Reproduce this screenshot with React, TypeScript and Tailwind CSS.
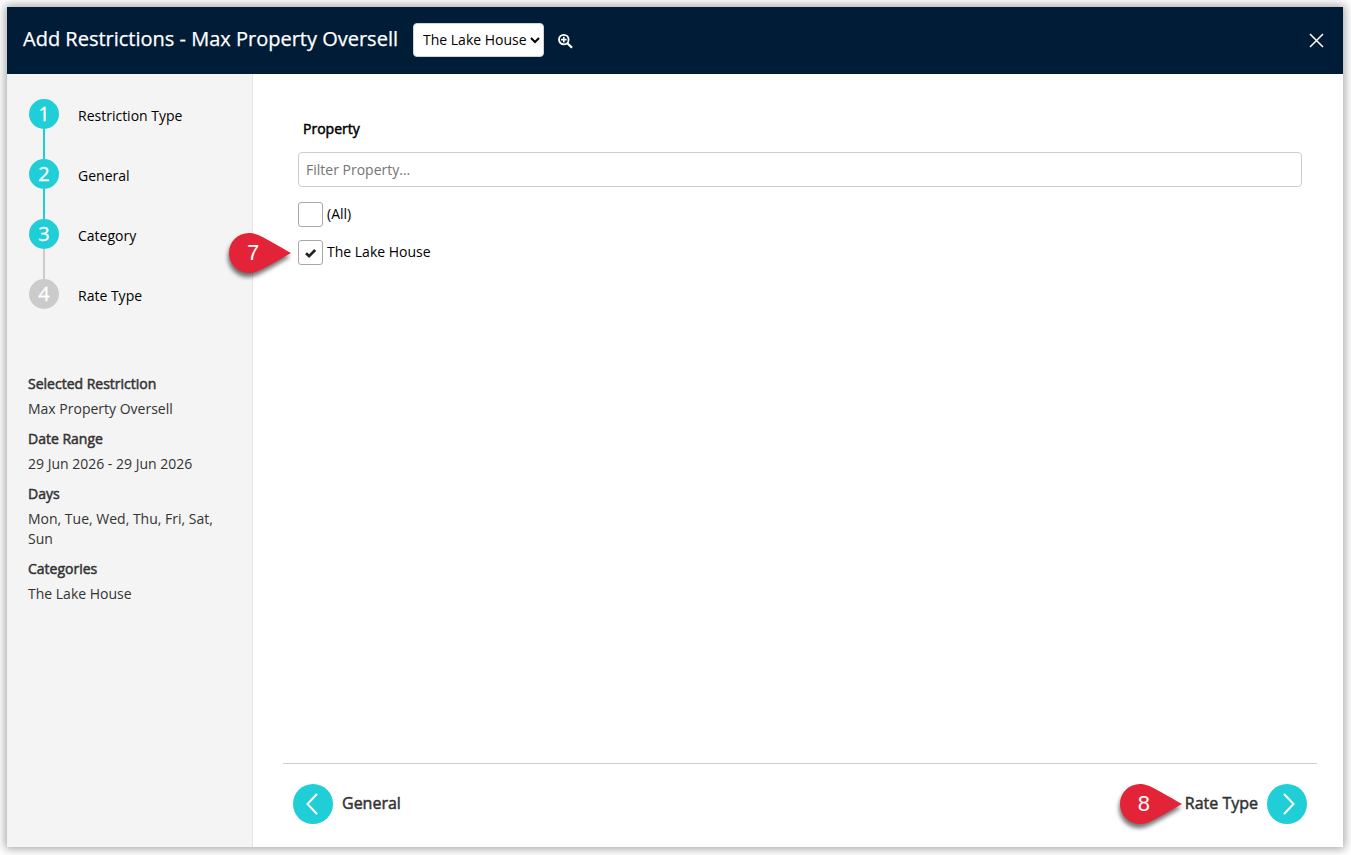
import { useState } from "react";

const steps = [
  { label: "Restriction Type", done: true },
  { label: "General", done: true },
  { label: "Category", done: true },
  { label: "Rate Type", done: false },
];

const summary = [
  { title: "Selected Restriction", value: "Max Property Oversell" },
  { title: "Date Range", value: "29 Jun 2026 - 29 Jun 2026" },
  { title: "Days", value: "Mon, Tue, Wed, Thu, Fri, Sat, Sun" },
  { title: "Categories", value: "The Lake House" },
];

function Callout({ number, className }: { number: string; className: string }) {
  return <div className={`absolute w-[62px] h-10 ${className}`}>
    <svg viewBox="0 0 62 40" className="absolute inset-0 w-[62px] h-10 overflow-visible drop-shadow-[-1px_4px_2px_rgba(0,0,0,0.55)]">
      <path d="M20 0C28 0 34 4 62 20C34 36 28 40 20 40A20 20 0 0 1 20 0Z" fill="#e32338" />
    </svg>
    <span className="absolute left-[18px] top-2 font-['Liberation_Sans',sans-serif] text-[22px] leading-6 text-white">{number}</span>
  </div>
}

function Checkbox({ label, checked, onClick }: { label: string; checked: boolean; onClick: () => void }) {
  return <div onClick={onClick} className="flex h-[25px] cursor-pointer gap-1">
    <div className="flex size-[25px] items-center justify-center rounded-[3px] border border-[#a9a9a9] bg-white">
      {checked && <svg viewBox="0 0 11 9" className="mt-0.5 h-[9px] w-[11px] overflow-visible" fill="none" stroke="#212529" strokeWidth="2.7">
        <path d="M1 4.2L4.1 7.1L10.2 1" />
      </svg>}
    </div>
    <span className="leading-[23px]">{label}</span>
  </div>
}

export default function App() {
  const [all, setAll] = useState(false);
  const [lake, setLake] = useState(true);

  return <div className="h-[855px] w-[1351px] bg-white p-[7px] pb-2 font-['Open_Sans',sans-serif] text-sm text-black">
    <div className="flex h-[840px] w-[1336px] flex-col bg-white shadow-[0_0_9px_2px_rgba(0,0,0,0.35)]">
      {/* header */}
      <div className="flex h-[67px] items-center bg-[#001c36] pl-4 pr-5 text-white">
        <h1 className="-mt-1 w-[390px] whitespace-nowrap text-xl [-webkit-text-stroke:0.25px]">Add Restrictions - Max Property Oversell</h1>
        <select className="mb-0.5 h-[34px] w-[131px] rounded border border-[#ced4da] bg-white pl-[5px] text-sm text-black">
          <option>The Lake House</option>
        </select>
        <svg viewBox="0 0 15 15" className="ml-3.5 mt-px size-[15px] overflow-visible" fill="none" stroke="currentColor" strokeWidth="2">
          <circle cx="5.8" cy="5.6" r="4.8" strokeWidth="1.8" />
          <path d="M9.4 9.2L14 13.8" strokeWidth="2.3" />
          <path d="M5.8 2.8V8.4M3 5.6H8.6" strokeWidth="1.6" />
        </svg>
        <svg viewBox="0 0 13 13" className="ml-auto size-[13px] overflow-visible" fill="none" stroke="currentColor" strokeWidth="1.5">
          <path d="M0 0L13 13M13 0L0 13" />
        </svg>
      </div>

      <div className="flex flex-1">
        {/* left side */}
        <div className="w-[246px] border-r border-[#e5e5e5] bg-[#f4f4f4] pt-[25px]">
          <div className="pl-[22px]">
            {steps.map((step, i) => <div key={step.label} className="flex h-[60px] gap-[19px]">
              <div className="flex w-[30px] flex-col items-center">
                <div className={`flex size-[30px] shrink-0 items-center justify-center rounded-full text-xl leading-none text-white [-webkit-text-stroke:0.3px] ${step.done ? "bg-[#20ced8]" : "bg-[#cbcbcb]"}`}>{i + 1}</div>
                {i < steps.length - 1 && <div className={`w-0.5 flex-1 ${steps[i + 1].done ? "bg-[#20ced8]" : "bg-[#cbcbcb]"}`} />}
              </div>
              <span className="pt-[7px] leading-5">{step.label}</span>
            </div>)}
          </div>
          <div className="mt-[35px] pl-[21px] pr-5 leading-5 text-[#333]">
            {summary.map(item => <div key={item.title} className="mb-2.5">
              <p className="mb-[5px] [-webkit-text-stroke:0.5px]">{item.title}</p>
              <p>{item.value}</p>
            </div>)}
          </div>
        </div>

        {/* right side */}
        <div className="flex flex-1 flex-col pl-[30px] pr-[26px]">
          <div className="flex-1 pl-[15px] pr-[15px] pt-[45px]">
            <p className="pl-[5px] leading-5 [-webkit-text-stroke:0.5px]">Property</p>
            <input placeholder="Filter Property..." className="mt-[13px] block h-[35px] w-full rounded border border-[#ccc] px-[7px] text-sm placeholder:text-[#757575]" />
            <div className="relative mt-[15px] flex flex-col gap-[13px]">
              <Checkbox label="(All)" checked={all} onClick={() => setAll(!all)} />
              <Checkbox label="The Lake House" checked={lake} onClick={() => setLake(!lake)} />
              <Callout number="7" className="left-[-69px] top-[31px]" />
            </div>
          </div>
          <div className="flex h-[84px] items-start justify-between border-t border-[#ccc] px-2.5 pt-5 text-base text-[#333]">
            <button className="flex items-center gap-[9px]">
              <span className="flex size-10 items-center justify-center rounded-full bg-[#20ced8] text-white">
                <svg viewBox="0 0 12 20" className="mr-0.5 h-5 w-3 overflow-visible" fill="none" stroke="currentColor" strokeWidth="2" strokeLinecap="round">
                  <path d="M10.5 0.5L1.5 10L10.5 19.5" />
                </svg>
              </span>
              <span className="mb-0.5 [-webkit-text-stroke:0.5px]">General</span>
            </button>
            <button className="relative flex items-center gap-[9px]">
              <Callout number="8" className="left-[-65px] top-0" />
              <span className="mb-0.5 [-webkit-text-stroke:0.5px]">Rate Type</span>
              <span className="flex size-10 items-center justify-center rounded-full bg-[#20ced8] text-white">
                <svg viewBox="0 0 12 20" className="ml-1 h-5 w-3 overflow-visible" fill="none" stroke="currentColor" strokeWidth="2" strokeLinecap="round">
                  <path d="M1.5 0.5L10.5 10L1.5 19.5" />
                </svg>
              </span>
            </button>
          </div>
        </div>
      </div>
    </div>
  </div>
}
